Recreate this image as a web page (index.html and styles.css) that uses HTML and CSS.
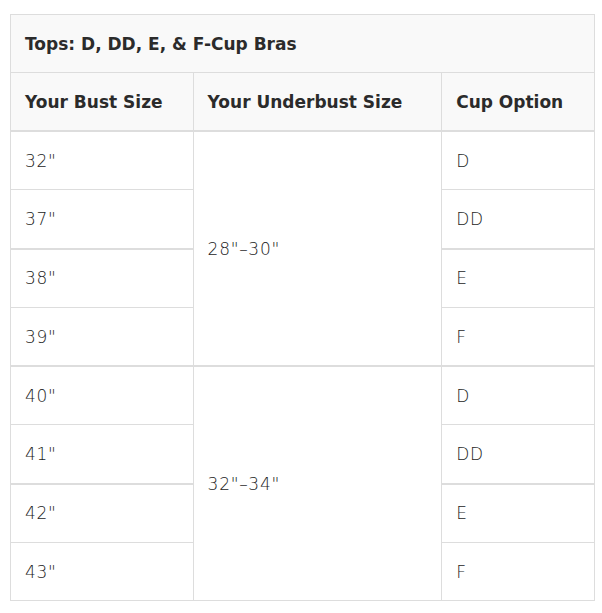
FILE: index.html
```html
<!DOCTYPE html>
<html lang="en">
<head>
<meta charset="utf-8">
<title>Tops: D, DD, E, &amp; F-Cup Bras</title>
<link rel="stylesheet" href="styles.css">
</head>
<body>
<div class="wrap">
<table class="size-table">
  <colgroup>
    <col class="c1"><col class="c2"><col class="c3">
  </colgroup>
  <thead>
    <tr class="title-row"><th colspan="3">Tops: D, DD, E, &amp; F-Cup Bras</th></tr>
    <tr class="head-row"><th>Your Bust Size</th><th>Your Underbust Size</th><th>Cup Option</th></tr>
  </thead>
  <tbody>
    <tr class="group-start"><td>32"</td><td rowspan="4" class="span">28"–30"</td><td>D</td></tr>
    <tr><td>37"</td><td>DD</td></tr>
    <tr class="pair"><td>38"</td><td>E</td></tr>
    <tr><td>39"</td><td>F</td></tr>
    <tr class="group-start"><td>40"</td><td rowspan="4" class="span">32"–34"</td><td>D</td></tr>
    <tr><td>41"</td><td>DD</td></tr>
    <tr class="pair"><td>42"</td><td>E</td></tr>
    <tr><td>43"</td><td>F</td></tr>
  </tbody>
</table>
</div>
</body>
</html>
```
FILE: styles.css
```css
html, body {
  margin: 0;
  padding: 0;
  background: #ffffff;
}
.wrap {
  padding: 14px 8px 0 10px;
}
.size-table {
  width: 585px;
  border-collapse: collapse;
  font-family: "DejaVu Sans", "Open Sans", sans-serif;
  color: #333333;
  font-size: 17px;
}
.c1 { width: 183px; }
.c2 { width: 249px; }
.c3 { width: 153px; }
.size-table th,
.size-table td {
  border: 1px solid #dddddd;
  padding: 0 15px 0 14px;
  text-align: left;
  vertical-align: middle;
}
.size-table th {
  background: #f9f9f9;
  font-weight: 700;
  color: #2b2b2b;
  height: 57px;
  font-size: 17px;
}
.size-table td {
  height: 57.3px;
  font-weight: 200;
  color: #1c1c1c;
  font-size: 17px;
  letter-spacing: 0.7px;
}
.head-row th {
  border-bottom: 2px solid #dddddd;
}
.group-start td,
.pair td {
  border-top: 2px solid #dddddd;
}
.size-table td.span {
  border-top: 1px solid #dddddd;
}
.group-start td.span {
  border-top: 2px solid #dddddd;
}
```
